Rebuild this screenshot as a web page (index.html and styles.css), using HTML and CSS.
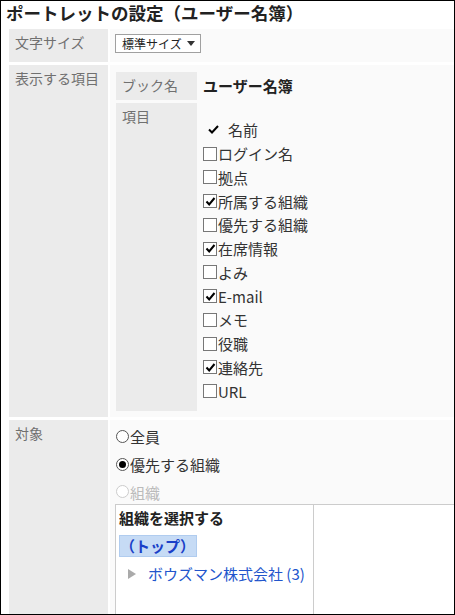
FILE: index.html
```html
<!DOCTYPE html>
<html lang="ja">
<head>
<meta charset="utf-8">
<title>ポートレットの設定（ユーザー名簿）</title>
<link rel="stylesheet" href="styles.css">
</head>
<body>
<div class="frame">
  <h1 class="title">ポートレットの設定（ユーザー名簿）</h1>
  <div class="form">
    <div class="label row1">文字サイズ</div>
    <div class="value row1v">
      <div class="select">標準サイズ<span class="caret"></span></div>
    </div>

    <div class="label">表示する項目</div>
    <div class="value row2v">
      <div class="inner">
        <div class="ilabel irow1">ブック名</div>
        <div class="ivalue irow1"><span class="bookname">ユーザー名簿</span></div>
        <div class="ilabel">項目</div>
        <div class="ivalue items">
          <div class="item fixed"><svg class="tick" width="11" height="9" viewBox="0 0 11 9"><path d="M1 4.5 L4 7.5 L10 1" fill="none" stroke="#000" stroke-width="2"/></svg>名前</div>
          <div class="item"><span class="cb"></span>ログイン名</div>
          <div class="item"><span class="cb"></span>拠点</div>
          <div class="item"><span class="cb on"><svg width="11" height="11" viewBox="0 0 11 11"><path d="M1.5 5.5 L4.2 8.5 L9.5 2" fill="none" stroke="#000" stroke-width="2"/></svg></span>所属する組織</div>
          <div class="item"><span class="cb"></span>優先する組織</div>
          <div class="item"><span class="cb on"><svg width="11" height="11" viewBox="0 0 11 11"><path d="M1.5 5.5 L4.2 8.5 L9.5 2" fill="none" stroke="#000" stroke-width="2"/></svg></span>在席情報</div>
          <div class="item"><span class="cb"></span>よみ</div>
          <div class="item"><span class="cb on"><svg width="11" height="11" viewBox="0 0 11 11"><path d="M1.5 5.5 L4.2 8.5 L9.5 2" fill="none" stroke="#000" stroke-width="2"/></svg></span>E-mail</div>
          <div class="item"><span class="cb"></span>メモ</div>
          <div class="item"><span class="cb"></span>役職</div>
          <div class="item"><span class="cb on"><svg width="11" height="11" viewBox="0 0 11 11"><path d="M1.5 5.5 L4.2 8.5 L9.5 2" fill="none" stroke="#000" stroke-width="2"/></svg></span>連絡先</div>
          <div class="item"><span class="cb"></span>URL</div>
        </div>
      </div>
    </div>

    <div class="label">対象</div>
    <div class="value row3v">
      <div class="radios">
        <div class="radio"><span class="rb"></span>全員</div>
        <div class="radio"><span class="rb on"></span>優先する組織</div>
        <div class="radio disabled"><span class="rb"></span>組織</div>
      </div>
      <div class="picker">
        <div class="pane">
          <div class="pick-title">組織を選択する</div>
          <div class="chip">（トップ）</div>
          <div class="tree-row"><span class="tri"></span><span class="org">ボウズマン株式会社 (3)</span></div>
        </div>
        <div class="pane right"></div>
      </div>
    </div>
  </div>
</div>
</body>
</html>
```

FILE: styles.css
```css
* { box-sizing: border-box; }
html, body { margin: 0; padding: 0; background: #fff; }
body {
  font-family: "Noto Sans CJK JP", "Noto Sans", sans-serif;
  color: #333;
}
.frame {
  width: 455px;
  height: 615px;
  border: 1px solid #000;
  overflow: hidden;
  background: #fff;
}
.title {
  margin: 0;
  height: 28px;
  padding-left: 5px;
  font-size: 17.5px;
  line-height: 24px;
  font-weight: bold;
  color: #222;
  white-space: nowrap;
}
.form {
  display: grid;
  grid-template-columns: 99px 1fr;
  column-gap: 2px;
  row-gap: 3px;
  margin-left: 8px;
}
.label {
  background: #ebebeb;
  color: #707070;
  font-size: 14px;
  line-height: 20px;
  padding: 3px 6px 0 6px;
}
.value {
  background: #fafafa;
}
.row1, .row1v { height: 33px; }
.row1v { padding: 5px 0 0 5px; }
.select {
  display: flex;
  align-items: center;
  justify-content: space-between;
  width: 86px;
  height: 19px;
  border: 1px solid #a0a0a0;
  background: #fff;
  font-size: 12px;
  line-height: 16px;
  padding: 0 5px 0 6px;
  color: #222;
}
.caret {
  width: 0;
  height: 0;
  border-left: 4px solid transparent;
  border-right: 4px solid transparent;
  border-top: 5px solid #333;
}
.row2v { padding: 7px 0 6px 6px; }
.inner {
  display: grid;
  grid-template-columns: 81px 1fr;
  column-gap: 3px;
  row-gap: 3px;
}
.ilabel {
  background: #ebebeb;
  color: #707070;
  font-size: 14px;
  line-height: 20px;
  padding: 3px 6px 0 6px;
}
.irow1 { height: 28px; }
.ivalue { padding-left: 3px; }
.bookname {
  display: block;
  font-weight: bold;
  font-size: 15px;
  line-height: 20px;
  padding-top: 4px;
  color: #222;
}
.items { padding-top: 15px; padding-bottom: 8px; }
.item {
  display: flex;
  align-items: center;
  height: 23.75px;
  font-size: 15px;
  color: #333;
  white-space: nowrap;
}
.item.fixed .tick { margin: 0 9px 0 5px; }
.cb {
  display: inline-flex;
  align-items: center;
  justify-content: center;
  width: 14px;
  height: 14px;
  border: 1px solid #777;
  background: #fff;
  margin-right: 1px;
  flex: none;
}
.cb svg { display: block; }
.row3v { padding-top: 2px; }
.radios { padding-left: 6px; }
.radio {
  display: flex;
  align-items: center;
  height: 28px;
  font-size: 15px;
  color: #333;
}
.radio:last-child { height: 26px; align-items: flex-start; padding-top: 4px; }
.rb {
  width: 13px;
  height: 13px;
  border: 1px solid #555;
  border-radius: 50%;
  background: #fff;
  margin-right: 1px;
  display: inline-flex;
  align-items: center;
  justify-content: center;
  flex: none;
}
.radio:last-child .rb { margin-top: 3px; }
.rb.on::after {
  content: "";
  width: 7px;
  height: 7px;
  border-radius: 50%;
  background: #000;
}
.radio.disabled { color: #bbb; }
.radio.disabled .rb { border-color: #ccc; }
.picker {
  display: flex;
  margin-left: 5px;
  height: 130px;
  border: 1px solid #ccc;
  background: #fff;
}
.pane {
  width: 197px;
  padding: 3px 0 0 3px;
}
.pane.right {
  flex: 1;
  border-left: 1px solid #ccc;
}
.pick-title {
  font-size: 15px;
  font-weight: bold;
  line-height: 20px;
  color: #222;
}
.chip {
  display: inline-block;
  margin-top: 7px;
  width: 78px;
  height: 22px;
  background: #c6dbf5;
  border: 1px solid #b0ccef;
  color: #1a3fc8;
  font-weight: bold;
  font-size: 15px;
  line-height: 20px;
  white-space: nowrap;
}
.tree-row {
  display: flex;
  align-items: center;
  height: 22px;
  margin-top: 6px;
}
.tri {
  width: 0;
  height: 0;
  border-top: 5px solid transparent;
  border-bottom: 5px solid transparent;
  border-left: 8px solid #aaa;
  margin-left: 9px;
  margin-right: 12px;
}
.org {
  color: #2255cc;
  font-size: 15px;
  line-height: 20px;
  white-space: nowrap;
}
```
